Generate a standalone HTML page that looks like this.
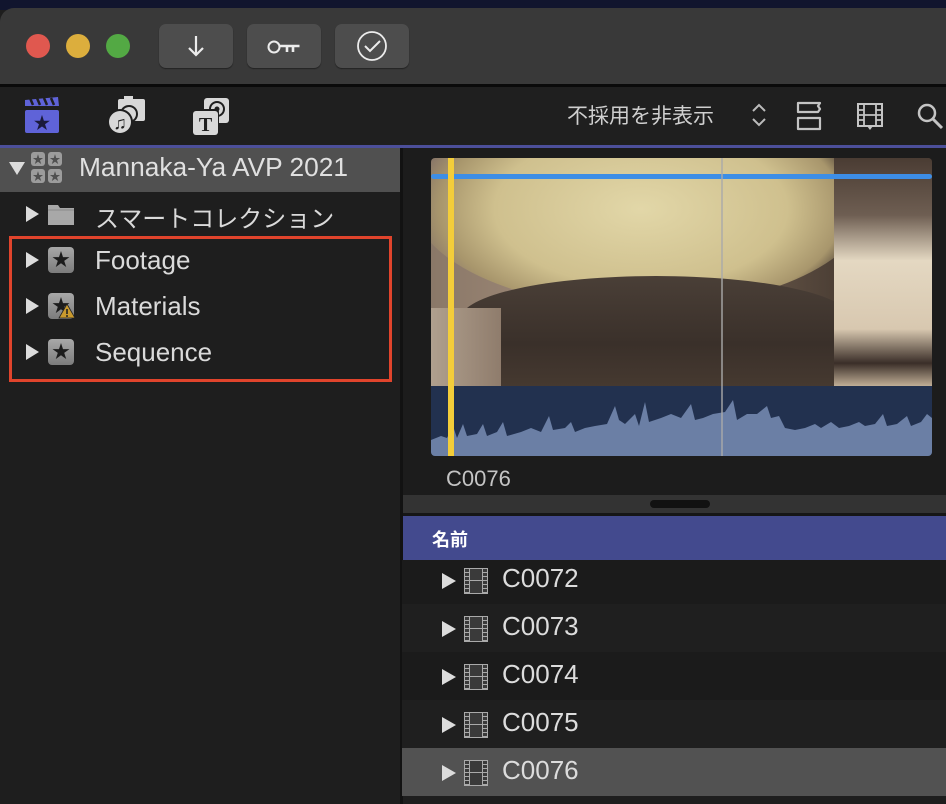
<!DOCTYPE html>
<html><head><meta charset="utf-8"><style>
*{margin:0;padding:0;box-sizing:border-box}
body{width:946px;height:804px;overflow:hidden;background:#1e1e1e;font-family:"Liberation Sans","Noto Sans CJK JP",sans-serif;position:relative;color:#d6d6d6}
.a{position:absolute}
.btn{position:absolute;top:24px;width:74px;height:44px;background:#4d4d4d;border-radius:7px;box-shadow:0 1px 1px #222}
.dot{position:absolute;top:34px;width:24px;height:24px;border-radius:50%}
.tri{position:absolute;width:0;height:0;border-top:8px solid transparent;border-bottom:8px solid transparent;border-left:13px solid #dcdcdc}
.star{position:absolute;width:26px;height:26px;border-radius:4px;background:linear-gradient(#a8a8a8,#7c7c7c);color:#1c1c1c;font-size:18px;text-align:center;line-height:26px}
.lbl{position:absolute;font-size:26px;color:#dadada}
.row{position:absolute;left:402px;width:544px;height:48px}
.row .tri{left:40px;top:13px;border-top-width:8px;border-bottom-width:8px;border-left-width:14px}
.row .fm{position:absolute;left:62px;top:8px;width:24px;height:26px;border:1.5px solid #aaa;background:#3a3a3a}
.row .fm:before,.row .fm:after{content:"";position:absolute;top:0;bottom:0;width:4px;border-left:1px solid #aaa;border-right:1px solid #aaa;background:repeating-linear-gradient(#3a3a3a 0 3px,#aaa 3px 4px)}
.row .fm:before{left:-1px}.row .fm:after{right:-1px}
.row .fm i{position:absolute;left:4px;right:4px;top:11px;border-top:1.5px solid #aaa}
.row span{position:absolute;left:100px;top:3px;font-size:26px;color:#dcdcdc}
</style></head><body>
<div class="a" style="left:0;top:0;width:946px;height:10px;background:#11152e"></div>
<div class="a" style="left:0;top:8px;width:946px;height:78px;background:#393939;border-radius:14px 0 0 0"></div>
<div class="dot" style="left:26px;background:#e0584f"></div>
<div class="dot" style="left:66px;background:#dcae3d"></div>
<div class="dot" style="left:106px;background:#53a944"></div>
<div class="btn" style="left:159px"><svg width="74" height="44"><path d="M37 12v19M30 24l7 7 7-7" stroke="#ececec" stroke-width="2.2" fill="none"/></svg></div>
<div class="btn" style="left:247px"><svg width="74" height="44"><circle cx="27" cy="23" r="5.5" stroke="#ececec" stroke-width="2" fill="none"/><path d="M32.5 22h20M40 22v6M46 22v6" stroke="#ececec" stroke-width="2.6" fill="none"/></svg></div>
<div class="btn" style="left:335px"><svg width="74" height="44"><circle cx="37" cy="22" r="14" stroke="#ececec" stroke-width="1.8" fill="none"/><path d="M30 22l5 5 10-10" stroke="#ececec" stroke-width="2" fill="none"/></svg></div>
<div class="a" style="left:0;top:84px;width:946px;height:3px;background:#0a0a0a"></div>
<div class="a" style="left:0;top:87px;width:946px;height:58px;background:#1f1f1f"></div>
<div class="a" style="left:0;top:145px;width:946px;height:3px;background:#4c4f9a"></div>
<svg class="a" style="left:24px;top:97px" width="36" height="38"><path d="M1 3l33-3 1 9H1z" fill="#5f63d8"/><path d="M6 1l3 7M13 1l3 7M20 1l3 7M27 1l3 7" stroke="#1f1f1f" stroke-width="2.5"/><rect x="1" y="13" width="34" height="23" rx="2" fill="#5f63d8"/><text x="18" y="32" font-size="17" text-anchor="middle" fill="#1a1a3a">★</text></svg>
<svg class="a" style="left:106px;top:96px" width="40" height="40"><rect x="12" y="3" width="27" height="22" rx="2" fill="#d8d8d8"/><rect x="18" y="0" width="9" height="5" fill="#d8d8d8"/><circle cx="23" cy="18" r="9" fill="#1f1f1f"/><circle cx="23" cy="18" r="7" fill="#d8d8d8"/><circle cx="14" cy="26" r="13" fill="#1f1f1f"/><circle cx="14" cy="26" r="11" fill="#d8d8d8"/><text x="14" y="33" font-size="18" text-anchor="middle" fill="#1f1f1f">♫</text></svg>
<svg class="a" style="left:191px;top:97px" width="40" height="40"><rect x="13" y="1" width="25" height="25" rx="3" fill="#d8d8d8"/><circle cx="26" cy="12" r="7" fill="none" stroke="#1f1f1f" stroke-width="2"/><circle cx="26" cy="12" r="2.5" fill="#1f1f1f"/><rect x="0" y="12" width="28" height="27" rx="3" fill="#1f1f1f"/><rect x="2" y="14" width="25" height="24" rx="3" fill="#d8d8d8"/><text x="14.5" y="34" font-size="20" font-weight="bold" font-family="Liberation Serif" text-anchor="middle" fill="#1f1f1f">T</text></svg>
<div class="a" style="left:567px;top:100px;font-size:21px;color:#cfcfcf">不採用を非表示</div>
<svg class="a" style="left:749px;top:102px" width="20" height="26"><path d="M4 9l6-6 6 6M4 17l6 6 6-6" stroke="#bbb" stroke-width="2" fill="none"/></svg>
<svg class="a" style="left:795px;top:100px" width="30" height="32"><path d="M3 3h22l-2 3 2 3-2 3H3zM3 18h22v11H3z" fill="none" stroke="#c4c4c4" stroke-width="2.2" stroke-linejoin="round"/></svg>
<svg class="a" style="left:856px;top:102px" width="28" height="30"><rect x="2" y="2" width="24" height="22" fill="none" stroke="#c4c4c4" stroke-width="2"/><path d="M8 2v22M20 2v22M8 13h12M2 8h6M2 13h6M2 18h6M20 8h6M20 13h6M20 18h6" stroke="#c4c4c4" stroke-width="1.8"/><path d="M11 24l3 4 3-4z" fill="#c4c4c4"/></svg>
<svg class="a" style="left:916px;top:102px" width="30" height="30"><circle cx="11" cy="11" r="8" fill="none" stroke="#c4c4c4" stroke-width="2.5"/><path d="M17 17l9 9" stroke="#c4c4c4" stroke-width="3"/></svg>
<div class="a" style="left:0;top:148px;width:400px;height:656px;background:#1e1e1e"></div>
<div class="a" style="left:0;top:148px;width:400px;height:44px;background:#505050"></div>
<div class="a" style="left:400px;top:148px;width:3px;height:656px;background:#121212"></div>
<div class="a" style="left:9px;top:162px;width:0;height:0;border-left:8px solid transparent;border-right:8px solid transparent;border-top:13px solid #dcdcdc"></div>
<svg class="a" style="left:31px;top:152px" width="32" height="32"><g fill="#9c9c9c"><rect x="0" y="0" width="14" height="14" rx="3"/><rect x="17" y="0" width="14" height="14" rx="3"/><rect x="0" y="17" width="14" height="14" rx="3"/><rect x="17" y="17" width="14" height="14" rx="3"/></g><g font-size="11" fill="#505050" text-anchor="middle"><text x="7" y="11">★</text><text x="24" y="11">★</text><text x="7" y="28">★</text><text x="24" y="28">★</text></g></svg>
<div class="lbl" style="left:79px;top:152px;font-size:26.3px;color:#e0e0e0">Mannaka-Ya AVP 2021</div>
<div class="tri" style="left:26px;top:206px"></div>
<svg class="a" style="left:48px;top:203px" width="28" height="22"><path d="M0 2h10l2 3h14v17H0z" fill="#a8a8a8"/><path d="M0 7h26" stroke="#8a8a8a"/></svg>
<div class="lbl" style="left:95px;top:199px;font-size:24px">スマートコレクション</div>
<div class="a" style="left:9px;top:236px;width:383px;height:146px;border:3px solid #e0442c"></div>
<div class="tri" style="left:26px;top:252px"></div><div class="star" style="left:48px;top:247px">★</div><div class="lbl" style="left:95px;top:245px">Footage</div>
<div class="tri" style="left:26px;top:298px"></div><div class="star" style="left:48px;top:293px">★</div>
<svg class="a" style="left:58px;top:303px" width="18" height="16"><path d="M9 1l8 14H1z" fill="#c99a2e" stroke="#222" stroke-width=".8"/><path d="M9 6v5" stroke="#222" stroke-width="1.6"/><circle cx="9" cy="13" r="1" fill="#222"/></svg>
<div class="lbl" style="left:95px;top:291px">Materials</div>
<div class="tri" style="left:26px;top:344px"></div><div class="star" style="left:48px;top:339px">★</div><div class="lbl" style="left:95px;top:337px">Sequence</div>
<div class="a" style="left:403px;top:148px;width:543px;height:348px;background:#1c1c1c"></div>
<div class="a" style="left:431px;top:158px;width:501px;height:228px;overflow:hidden;border-radius:4px 4px 0 0;background:linear-gradient(90deg,#8a7868 0%,#9a8574 20%,#7a6656 50%,#4d4036 80%,#4a3c33 100%)">
 <div class="a" style="left:-20px;top:-70px;width:460px;height:220px;border-radius:50%;background:radial-gradient(ellipse at 50% 55%,#e2d7a8 0%,#cfc08e 45%,#a8966c 62%,rgba(150,130,100,0) 70%)"></div>
 <div class="a" style="left:30px;top:118px;width:390px;height:170px;border-radius:50% 50% 0 0/25% 25% 0 0;background:linear-gradient(#4a3f37,#3a302a 40%,#564638)"></div>
 <div class="a" style="left:0;top:150px;width:70px;height:78px;background:linear-gradient(90deg,#b0a08e,#8f7c6c)"></div>
 <div class="a" style="left:403px;top:0;width:98px;height:228px;background:linear-gradient(#4a3c33 0%,#6e5e52 25%,#e4d8c2 45%,#d8c8b0 75%,#3a2e28 90%,#c0ae96 100%)"></div>
</div>
<div class="a" style="left:431px;top:386px;width:501px;height:70px;background:#22314f;border-radius:0 0 4px 4px;overflow:hidden">
<svg width="501" height="70"><path d="M0 70L0 54 10 50 16 52 22 40 26 52 32 38 36 50 46 48 52 38 56 50 66 46 72 36 76 50 90 46 100 42 110 46 118 30 122 44 134 42 140 36 144 46 154 42 164 40 176 38 184 20 188 34 194 38 204 28 208 40 214 16 218 36 230 32 240 28 250 32 260 18 264 34 272 32 282 28 294 26 302 14 306 34 316 28 326 28 336 20 340 32 348 30 354 42 364 44 374 42 384 38 390 42 400 36 408 42 418 40 428 36 434 40 444 38 452 28 456 40 466 38 476 30 480 40 490 36 496 28 501 32 501 70z" fill="#6b7fa5"/></svg></div>
<div class="a" style="left:431px;top:174px;width:501px;height:5px;background:#3d8ee6;border-radius:3px"></div>
<div class="a" style="left:448px;top:158px;width:6px;height:298px;background:#f3cd3a"></div>
<div class="a" style="left:721px;top:158px;width:2px;height:298px;background:#aaa;opacity:.7"></div>
<div class="a" style="left:446px;top:466px;font-size:22px;color:#c4c4c4">C0076</div>
<div class="a" style="left:403px;top:495px;width:543px;height:18px;background:#333"></div>
<div class="a" style="left:650px;top:500px;width:60px;height:8px;border-radius:4px;background:#111"></div>
<div class="a" style="left:403px;top:513px;width:543px;height:3px;background:#161616"></div>
<div class="a" style="left:403px;top:516px;width:543px;height:44px;background:#434a8e"></div>
<div class="a" style="left:432px;top:526px;font-size:18px;font-weight:bold;color:#fff">名前</div>
<div class="row" style="top:560px;height:44px;background:#1b1b1b"><div class="tri"></div><div class="fm"><i></i></div><span>C0072</span></div>
<div class="row" style="top:604px;background:#1f1f1f"><div class="tri" style="top:17px"></div><div class="fm" style="top:12px"><i></i></div><span style="top:7px">C0073</span></div>
<div class="row" style="top:652px;background:#1b1b1b"><div class="tri" style="top:17px"></div><div class="fm" style="top:12px"><i></i></div><span style="top:7px">C0074</span></div>
<div class="row" style="top:700px;background:#1f1f1f"><div class="tri" style="top:17px"></div><div class="fm" style="top:12px"><i></i></div><span style="top:7px">C0075</span></div>
<div class="row" style="top:748px;background:#525252"><div class="tri" style="top:17px"></div><div class="fm" style="top:12px"><i></i></div><span style="top:7px">C0076</span></div>
</body></html>
